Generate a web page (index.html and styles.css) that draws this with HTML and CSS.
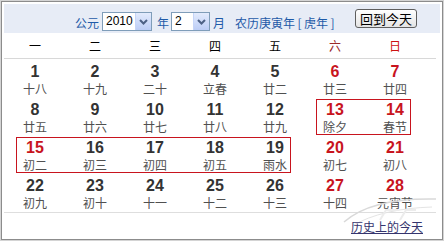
FILE: index.html
```html
<!DOCTYPE html>
<html lang="zh">
<head>
<meta charset="utf-8">
<title>万年历</title>
<link rel="stylesheet" href="styles.css">
</head>
<body>
<div class="cal">
  <div class="inner">
    <div class="head">
      <span class="lbl">公元</span>
      <div class="sel sel-year"><span class="val">2010</span><span class="arr"><svg width="9" height="6" viewBox="0 0 9 6"><polyline points="1,1 4.5,4.5 8,1" fill="none" stroke="#4d6185" stroke-width="2"/></svg></span></div>
      <span class="lbl lbl-nian">年</span>
      <div class="sel sel-month"><span class="val">2</span><span class="arr"><svg width="9" height="6" viewBox="0 0 9 6"><polyline points="1,1 4.5,4.5 8,1" fill="none" stroke="#4d6185" stroke-width="2"/></svg></span></div>
      <span class="lbl lbl-yue">月</span>
      <span class="lunar-year">农历庚寅年<span class="br">[</span>虎年<span class="br">]</span></span>
      <button class="today" type="button">回到今天</button>
    </div>

    <div class="weekdays">
      <span>一</span><span>二</span><span>三</span><span>四</span><span>五</span><span class="sat">六</span><span class="sun">日</span>
    </div>

    <div class="days">
      <div class="cell"><div class="num">1</div><div class="lun">十八</div></div>
      <div class="cell"><div class="num">2</div><div class="lun">十九</div></div>
      <div class="cell"><div class="num">3</div><div class="lun">二十</div></div>
      <div class="cell"><div class="num">4</div><div class="lun">立春</div></div>
      <div class="cell"><div class="num">5</div><div class="lun">廿二</div></div>
      <div class="cell red"><div class="num">6</div><div class="lun">廿三</div></div>
      <div class="cell red"><div class="num">7</div><div class="lun">廿四</div></div>

      <div class="cell"><div class="num">8</div><div class="lun">廿五</div></div>
      <div class="cell"><div class="num">9</div><div class="lun">廿六</div></div>
      <div class="cell"><div class="num">10</div><div class="lun">廿七</div></div>
      <div class="cell"><div class="num">11</div><div class="lun">廿八</div></div>
      <div class="cell"><div class="num">12</div><div class="lun">廿九</div></div>
      <div class="mark mark2">
        <div class="cell red"><div class="num">13</div><div class="lun">除夕</div></div>
        <div class="cell red"><div class="num">14</div><div class="lun">春节</div></div>
      </div>

      <div class="mark mark5">
        <div class="cell red"><div class="num">15</div><div class="lun">初二</div></div>
        <div class="cell"><div class="num">16</div><div class="lun">初三</div></div>
        <div class="cell"><div class="num">17</div><div class="lun">初四</div></div>
        <div class="cell"><div class="num">18</div><div class="lun">初五</div></div>
        <div class="cell"><div class="num">19</div><div class="lun">雨水</div></div>
      </div>
      <div class="cell red"><div class="num">20</div><div class="lun">初七</div></div>
      <div class="cell red"><div class="num">21</div><div class="lun">初八</div></div>

      <div class="cell"><div class="num">22</div><div class="lun">初九</div></div>
      <div class="cell"><div class="num">23</div><div class="lun">初十</div></div>
      <div class="cell"><div class="num">24</div><div class="lun">十一</div></div>
      <div class="cell"><div class="num">25</div><div class="lun">十二</div></div>
      <div class="cell"><div class="num">26</div><div class="lun">十三</div></div>
      <div class="cell red"><div class="num">27</div><div class="lun">十四</div></div>
      <div class="cell red"><div class="num">28</div><div class="lun">元宵节</div></div>
    </div>

    <div class="foot"><a class="history" href="#">历史上的今天</a></div>

    <svg class="watermark" width="100" height="46" viewBox="0 0 100 46" aria-hidden="true">
      <path d="M4 32 C 22 16, 52 8, 96 9" fill="none" stroke="#d9d9d9" stroke-width="1.5"/>
      <path d="M12 36 C 32 24, 60 18, 92 17" fill="none" stroke="#e4e4e4" stroke-width="1"/>
      <path d="M40 30 L 46 20 L 58 20 M 60 30 L 66 20 L 76 20" fill="none" stroke="#ececec" stroke-width="2"/>
    </svg>
  </div>
</div>
</body>
</html>
```

FILE: styles.css
```css
html, body {
  margin: 0;
  padding: 0;
  background: #fff;
}

.cal {
  width: 444px;
  height: 241px;
  box-sizing: border-box;
  border: 1px solid #d4d4d4;
}

.inner {
  position: relative;
  height: 100%;
  box-sizing: border-box;
  border: 1px solid #8c8c8c;
  padding: 2px;
  font-family: "Noto Sans CJK SC", "Liberation Sans", sans-serif;
  font-size: 12px;
}

/* header band */
.head {
  display: flex;
  align-items: center;
  height: 29px;
  padding-left: 71px;
  background: #e7ecf6;
}

.lbl {
  font-size: 12px;
  line-height: 19px;
  color: #1f5aa8;
  margin-top: 8px;
}

.lbl-nian { margin-left: 5px; }
.lbl-yue { margin-left: 3px; }

.sel {
  display: flex;
  align-items: stretch;
  height: 19px;
  box-sizing: border-box;
  border: 1px solid #7f9db9;
  background: #fff;
  margin-top: 6px;
}

.sel-year { width: 50px; margin-left: 3px; }
.sel-month { width: 39px; margin-left: 2px; }

.val {
  flex: 1;
  font-family: "Liberation Sans", Arial, sans-serif;
  font-size: 12px;
  line-height: 17px;
  color: #000;
  padding-left: 3px;
}

.arr {
  width: 15px;
  display: flex;
  align-items: center;
  justify-content: center;
  background: linear-gradient(#e3ebfd, #bccdf6);
  border-left: 1px solid #c6d5f8;
}

.lunar-year {
  margin-left: 10px;
  margin-top: 8px;
  font-size: 12px;
  line-height: 19px;
  color: #1f5aa8;
  white-space: nowrap;
}

.br {
  display: inline-block;
  width: 9px;
  text-align: center;
}

.today {
  margin-left: 18px;
  width: 62px;
  height: 19px;
  padding: 0;
  box-sizing: border-box;
  border: 1px solid #5e5e5e;
  border-radius: 3px;
  background: linear-gradient(#ffffff, #e4e4e4);
  font-family: "Noto Sans CJK SC", sans-serif;
  font-size: 13px;
  line-height: 16px;
  color: #000;
}

/* weekday row */
.weekdays {
  display: grid;
  grid-template-columns: repeat(7, 60px);
  height: 25px;
  padding-left: 1px;
  margin-right: 4px;
  border-bottom: 1px solid #d8d8d8;
  align-items: center;
  text-align: center;
  font-size: 12px;
  line-height: 16px;
  color: #000;
}

.weekdays .sat { color: #9b2a2a; }
.weekdays .sun { color: #cc1111; }

/* days */
.days {
  display: grid;
  grid-template-columns: repeat(7, 60px);
  grid-template-rows: 38px 38px 38px 35px;
  padding: 4px 0 0 1px;
  margin-right: 4px;
  border-bottom: 1px solid #dedede;
}

.cell {
  text-align: center;
}

.num {
  font-family: "Liberation Sans", Arial, sans-serif;
  font-weight: 700;
  font-size: 16px;
  line-height: 18px;
  color: #333;
}

.lun {
  font-size: 12px;
  line-height: 16px;
  color: #505050;
  white-space: nowrap;
}

.red .num { color: #c8141e; }

.mark {
  position: relative;
  display: grid;
}

.mark2 {
  grid-column: span 2;
  grid-template-columns: repeat(2, 60px);
}

.mark5 {
  grid-column: span 5;
  grid-template-columns: repeat(5, 60px);
}

.mark::before {
  content: "";
  position: absolute;
  left: 11px;
  right: 14px;
  top: -2px;
  height: 34px;
  border: 1px solid #c8141e;
  pointer-events: none;
}

/* footer */
.foot {
  text-align: right;
  padding-right: 17px;
  margin-top: 6px;
  font-size: 12px;
  line-height: 16px;
  position: relative;
  z-index: 1;
}

.history {
  font-size: 12px;
  line-height: 16px;
  color: #35356e;
  text-decoration: underline;
}

/* watermark overlay */
.watermark {
  position: absolute;
  left: 338px;
  top: 188px;
  pointer-events: none;
}
```
